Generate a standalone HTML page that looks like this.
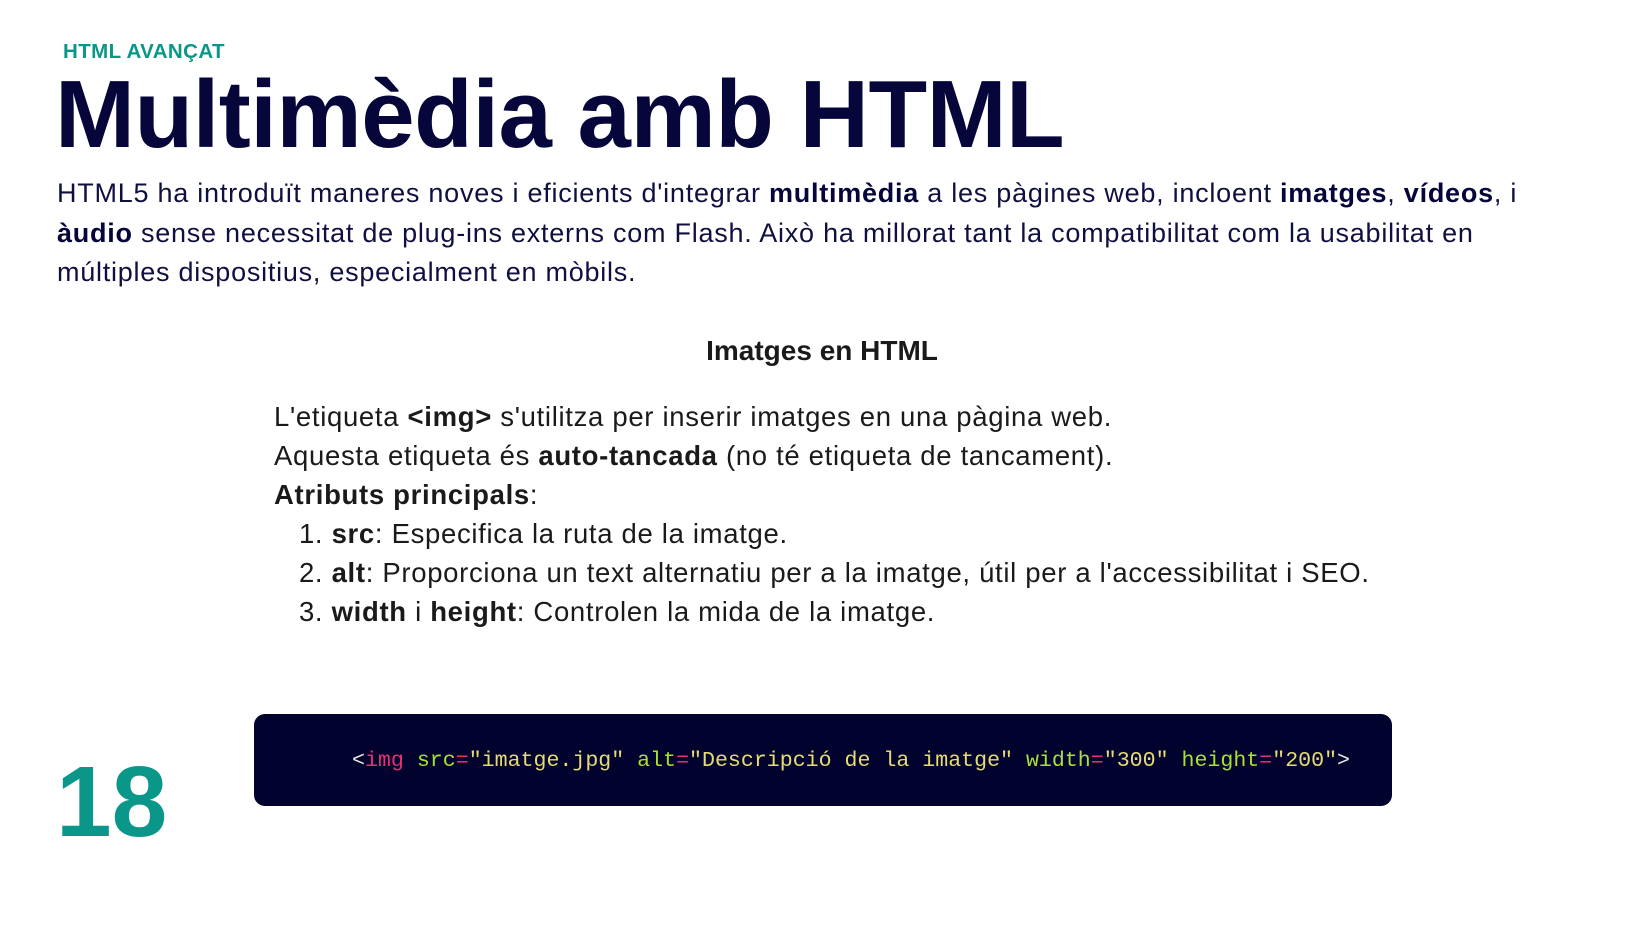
<!DOCTYPE html>
<html><head><meta charset="utf-8"><style>
html,body{margin:0;padding:0;background:#fff;width:1644px;height:925px;overflow:hidden;position:relative;font-family:"Liberation Sans",sans-serif}
.a{position:absolute;white-space:nowrap}
.kick{left:63px;top:40px;font-size:20.5px;font-weight:bold;color:#0a978a;letter-spacing:0.4px}
.title{left:55px;top:60px;font-size:96px;font-weight:bold;color:#06063a;letter-spacing:-0.5px;line-height:110px}
.p{left:57px;top:174px;font-size:27px;line-height:39.5px;color:#101040;letter-spacing:0.75px}
.p b{color:#06063a}
.h{left:0;width:1644px;text-align:center;top:335px;font-size:28px;font-weight:bold;color:#1a1a1a}
.l{left:274px;top:397px;font-size:27.5px;line-height:39px;color:#1a1a1a;letter-spacing:0.68px}
.code{position:absolute;left:254px;top:714px;width:1138px;height:92px;background:#02022f;border-radius:11px}
.ct{position:absolute;left:352px;top:749px;font-family:"Liberation Mono",monospace;font-size:21.6px;color:#e8e8e8;white-space:pre}
.t{color:#e8306f}.at{color:#a6e22e}.s{color:#e6db74}.eq{color:#e8306f}
.num{left:56px;top:752px;font-size:100px;font-weight:bold;color:#0a978a;line-height:100px;letter-spacing:0}
</style></head><body>
<div class="a kick">HTML AVANÇAT</div>
<div class="a title">Multimèdia amb HTML</div>
<div class="a p">HTML5 ha introduït maneres noves i eficients d'integrar <b>multimèdia</b> a les pàgines web, incloent <b>imatges</b>, <b>vídeos</b>, i<br><b>àudio</b> sense necessitat de plug-ins externs com Flash. Això ha millorat tant la compatibilitat com la usabilitat en<br>múltiples dispositius, especialment en mòbils.</div>
<div class="a h">Imatges en HTML</div>
<div class="a l">L'etiqueta <b>&lt;img&gt;</b> s'utilitza per inserir imatges en una pàgina web.<br>Aquesta etiqueta és <b>auto-tancada</b> (no té etiqueta de tancament).<br><b>Atributs principals</b>:<br>&nbsp;&nbsp;&nbsp;1. <b>src</b>: Especifica la ruta de la imatge.<br>&nbsp;&nbsp;&nbsp;2. <b>alt</b>: Proporciona un text alternatiu per a la imatge, útil per a l'accessibilitat i SEO.<br>&nbsp;&nbsp;&nbsp;3. <b>width</b> i <b>height</b>: Controlen la mida de la imatge.</div>
<div class="code"></div>
<div class="ct">&lt;<span class="t">img</span> <span class="at">src</span><span class="eq">=</span><span class="s">"imatge.jpg"</span> <span class="at">alt</span><span class="eq">=</span><span class="s">"Descripció de la imatge"</span> <span class="at">width</span><span class="eq">=</span><span class="s">"300"</span> <span class="at">height</span><span class="eq">=</span><span class="s">"200"</span>&gt;</div>
<div class="a num">18</div>
</body></html>
